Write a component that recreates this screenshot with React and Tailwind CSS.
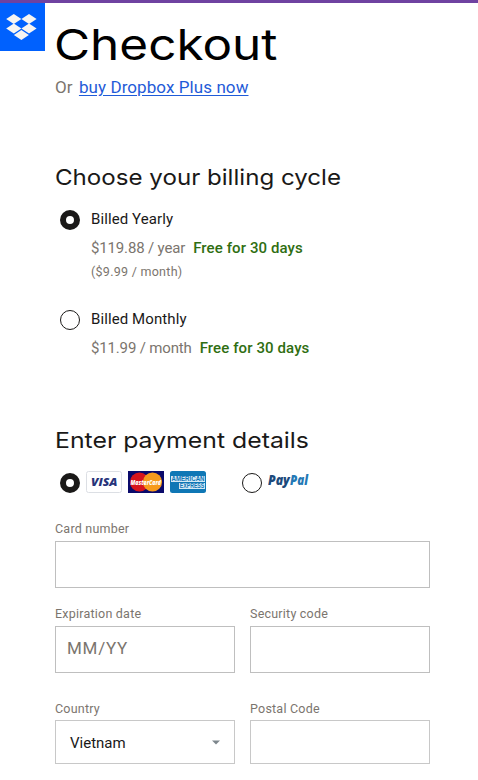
import React from "react";

function Radio({ checked = false }) {
  return (
    <span
      className={
        checked
          ? "block size-5 shrink-0 rounded-full border-[6px] border-[#1a1918] bg-white"
          : "block size-5 shrink-0 rounded-full border border-[#1a1918] bg-white"
      }
    />
  );
}

function DropboxLogo() {
  return (
    <div className="flex h-12 w-[45px] shrink-0 items-center justify-center bg-[#0061fe] pr-[3px]">
      <svg width="31" height="26" viewBox="0 0 31 26" fill="#f7f5f2">
        <path d="M7.8 0 15.4 5 7.8 10.1 0.2 5Z" />
        <path d="M23 0 30.6 5 23 10.1 15.4 5Z" />
        <path d="M7.8 9.6 15.4 14.6 7.8 19.6 0.2 14.6Z" />
        <path d="M23 9.6 30.6 14.6 23 19.6 15.4 14.6Z" />
        <path d="M15.4 15.9 22.9 20.9 15.4 25.9 7.9 20.9Z" />
      </svg>
    </div>
  );
}

function Visa() {
  return (
    <svg width="36" height="22" viewBox="0 0 36 22">
      <rect x="0.5" y="0.5" width="35" height="21" rx="2" fill="#fff" stroke="#dcdfe4" />
      <text x="5" y="15" textLength="26.5" lengthAdjust="spacingAndGlyphs" fontFamily="Open Sans, sans-serif" fontSize="11" fontWeight="800" fontStyle="italic" fill="#26337a">VISA</text>
    </svg>
  );
}

function MasterCard() {
  return (
    <svg className="overflow-visible" width="36" height="22" viewBox="0 0 36 22">
      <rect width="36" height="22" fill="#0a0a6b" />
      <circle cx="11.5" cy="11" r="9.6" fill="#d8141c" />
      <circle cx="24.5" cy="11" r="9.6" fill="#f79a1c" />
      <text x="2.5" y="13.7" textLength="30.5" lengthAdjust="spacingAndGlyphs" fontFamily="Open Sans, sans-serif" fontSize="7.4" fontWeight="800" fontStyle="italic" fill="#fff">MasterCard</text>
    </svg>
  );
}

function Amex() {
  return (
    <svg className="overflow-visible" width="36" height="22" viewBox="0 0 36 22">
      <rect width="36" height="22" rx="2.5" fill="#0f77b5" />
      <rect x="1" y="5" width="34" height="6" fill="#d5e9f5" />
      <rect x="9" y="12" width="26" height="6" fill="#d5e9f5" />
      <text x="1.5" y="10.2" textLength="33" lengthAdjust="spacingAndGlyphs" fontFamily="Liberation Sans, sans-serif" fontSize="6.4" fontWeight="700" fill="#0f77b5">AMERICAN</text>
      <text x="9.8" y="17.2" textLength="24.5" lengthAdjust="spacingAndGlyphs" fontFamily="Liberation Sans, sans-serif" fontSize="6.4" fontWeight="700" fill="#0f77b5">EXPRESS</text>
    </svg>
  );
}

function PayPal() {
  return (
    <svg width="42" height="18" viewBox="0 0 42 18">
      <text x="0" y="13" textLength="21.8" lengthAdjust="spacingAndGlyphs" fontFamily="Open Sans, sans-serif" fontSize="13.5" fontWeight="800" fontStyle="italic" fill="#1b4a7c">Pay</text>
      <text x="22" y="13" textLength="18" lengthAdjust="spacingAndGlyphs" fontFamily="Open Sans, sans-serif" fontSize="13.5" fontWeight="800" fontStyle="italic" fill="#2378b5">Pal</text>
    </svg>
  );
}

function Heading({ children, className }) {
  return (
    <h2
      className={`origin-left whitespace-nowrap font-['Inter',sans-serif] text-[22px] leading-8 text-[#1a1918] ${className}`}
    >
      {children}
    </h2>
  );
}

function Plan({ checked, name, price, priceClass, note }) {
  return (
    <div className="flex gap-[11px] pl-[5px]">
      <div className="pt-px">
        <Radio checked={checked} />
      </div>
      <div>
        <div className="text-[15px] leading-5 tracking-[0.1px] text-[#1a1918]">{name}</div>
        <div className="mt-[9px] flex gap-2 text-[15px] leading-5 text-[#7b756e]">
          <span className={priceClass}>{price}</span>
          <span className="font-medium tracking-[0.1px] text-[#2f6e12]">Free for 30 days</span>
        </div>
        {note && <div className="mt-1 text-[12.5px] leading-5 tracking-[0.27px] text-[#7b756e]">{note}</div>}
      </div>
    </div>
  );
}

function Field({ label, children, short = false }) {
  return (
    <div className="min-w-0 flex-1">
      <div className="text-[12.5px] leading-5 tracking-[0.22px] text-[#7b756e]">{label}</div>
      <div
        className={
          short
            ? "mt-px flex h-11 items-center border border-[#c8c8c8] pr-[14px] pl-[14px]"
            : "mt-[2px] flex h-[47px] items-center border border-[#bfbfbf] pb-[3px] pl-[11px]"
        }
      >
        {children}
      </div>
    </div>
  );
}

export default function App() {
  return (
    <div className="h-[780px] w-[478px] overflow-hidden bg-white font-['Roboto',sans-serif]">
      <div className="h-[3px] bg-[#6f42a1]" />
      <div className="flex gap-[10px]">
        <DropboxLogo />
        <main className="w-[375px] pt-[13px]">
          <h1 className="-ml-px w-max origin-left scale-x-[1.15] whitespace-nowrap font-['Inter',sans-serif] text-[43px] leading-[56px] text-black">
            Checkout
          </h1>
          <p className="mt-[3px] text-[17px] leading-6 tracking-[0.08px] text-[#7b756e]">
            Or <a className="ml-[2px] text-[#1f5bd8] underline underline-offset-2">buy Dropbox Plus now</a>
          </p>

          <section className="mt-[62px]">
            <Heading className="scale-x-[1.096]">Choose your billing cycle</Heading>
            <div className="mt-4 flex flex-col gap-[27px]">
              <Plan checked name="Billed Yearly" price="$119.88 / year" priceClass="tracking-[-0.16px]" note="($9.99 / month)" />
              <Plan name="Billed Monthly" price="$11.99 / month" priceClass="tracking-[-0.16px]" />
            </div>
          </section>

          <section className="mt-[66px]">
            <Heading className="scale-x-[1.127]">Enter payment details</Heading>
            <div className="mt-[15px] flex h-6 items-start pl-[5px]">
              <div className="pt-[2px]">
                <Radio checked />
              </div>
              <div className="ml-[6px] flex gap-[6px]">
                <Visa />
                <MasterCard />
                <Amex />
              </div>
              <div className="ml-9 pt-[2px]">
                <Radio />
              </div>
              <div className="ml-[6px] pt-[1px]">
                <PayPal />
              </div>
            </div>

            <div className="mt-6 flex">
              <Field label="Card number" />
            </div>
            <div className="mt-4 flex gap-[15px]">
              <Field label="Expiration date">
                <span className="text-[17px] leading-6 tracking-[0.75px] text-[#7b756e]">MM/YY</span>
              </Field>
              <Field label="Security code" />
            </div>
            <div className="mt-[26px] flex gap-[15px]">
              <Field label="Country" short>
                <span className="flex-1 pt-px text-[15px] leading-5 text-[#1a1918]">Vietnam</span>
                <svg width="8" height="5" viewBox="0 0 8 5">
                  <path d="M0 0.5H8L4 4.5Z" fill="#7d868c" />
                </svg>
              </Field>
              <Field label="Postal Code" short />
            </div>
          </section>
        </main>
      </div>
    </div>
  );
}
